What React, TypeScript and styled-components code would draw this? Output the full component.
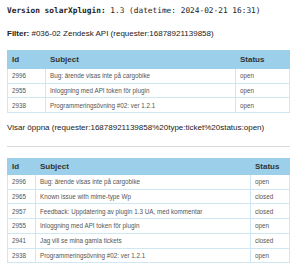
import React from "react";
import styled, {createGlobalStyle} from "styled-components";

const GlobalStyle = createGlobalStyle`
  html, body {
    margin: 0;
    padding: 0;
    background: #fff;
  }
  body {
    font-family: "Liberation Sans", Arial, sans-serif;
    color: #222;
  }
`;

const Page = styled.div`
  width: 282px;
  padding: 0 7px;
  display: flex;
  flex-direction: column;
`;

const VersionLine = styled.div`
  margin-top: 6px;
  height: 10px;
  line-height: 10px;
  font-family: "DejaVu Sans Mono", "Liberation Mono", monospace;
  font-size: 7.8px;
  white-space: nowrap;
  color: #222;

  b {
    font-weight: 700;
  }
`;

const FilterLine = styled.div`
  margin-top: 13px;
  height: 10px;
  line-height: 10px;
  font-size: 8px;
  white-space: nowrap;
  color: #222;
`;

const InfoLine = styled.div`
  margin-top: 10px;
  height: 10px;
  line-height: 10px;
  font-size: 8px;
  white-space: nowrap;
  color: #222;
`;

const Rule = styled.hr`
  margin: 13px 0 0 0;
  width: 283px;
  border: none;
  border-top: 1px solid #d8d8d8;
  height: 0;
`;

const Table = styled.table<{$top: number}>`
  margin-top: ${(p) => p.$top}px;
  width: 282px;
  border-collapse: collapse;
  table-layout: fixed;
`;

const Th = styled.th<{$h: number}>`
  background: #9bcfea;
  color: #333;
  font-size: 8px;
  font-weight: 700;
  text-align: left;
  padding: 0 4px;
  height: ${(p) => p.$h}px;
  border: 1px solid #9bcfea;
  white-space: nowrap;
`;

const Td = styled.td`
  font-size: 6.3px;
  color: #555;
  padding: 0 4px;
  height: 13.7px;
  border: 1px solid #cfe6f3;
  white-space: nowrap;
  overflow: hidden;
`;

interface Ticket {
  id: number;
  subject: string;
  status: string;
}

const filtered: Ticket[] = [
  {id: 2996, subject: "Bug: ärende visas inte på cargobike", status: "open"},
  {id: 2955, subject: "Inloggning med API token för plugin", status: "open"},
  {id: 2938, subject: "Programmeringsövning #02: ver 1.2.1", status: "open"},
];

const openTickets: Ticket[] = [
  {id: 2996, subject: "Bug: ärende visas inte på cargobike", status: "open"},
  {id: 2965, subject: "Known issue with mime-type Wp", status: "closed"},
  {id: 2957, subject: "Feedback: Uppdatering av plugin 1.3 UA, med kommentar", status: "closed"},
  {id: 2955, subject: "Inloggning med API token för plugin", status: "open"},
  {id: 2941, subject: "Jag vill se mina gamla tickets", status: "closed"},
  {id: 2938, subject: "Programmeringsövning #02: ver 1.2.1", status: "open"},
];

interface TicketTableProps {
  tickets: Ticket[];
  cols: [number, number, number];
  top: number;
  headH: number;
}

const TicketTable: React.FC<TicketTableProps> = ({tickets, cols, top, headH}) => (
  <Table $top={top}>
    <colgroup>
      <col style={{width: cols[0]}} />
      <col style={{width: cols[1]}} />
      <col style={{width: cols[2]}} />
    </colgroup>
    <thead>
      <tr>
        <Th $h={headH}>Id</Th>
        <Th $h={headH}>Subject</Th>
        <Th $h={headH}>Status</Th>
      </tr>
    </thead>
    <tbody>
      {tickets.map((t) => (
        <tr key={t.id}>
          <Td>{t.id}</Td>
          <Td>{t.subject}</Td>
          <Td>{t.status}</Td>
        </tr>
      ))}
    </tbody>
  </Table>
);

export default function App() {
  return (
    <>
      <GlobalStyle />
      <Page>
        <VersionLine>
          <b>Version solarXplugin:</b> 1.3 (datetime: 2024-02-21 16:31)
        </VersionLine>
        <FilterLine>
          <b>Filter:</b> #036-02 Zendesk API (requester:16878921139858)
        </FilterLine>
        <TicketTable tickets={filtered} cols={[38, 190, 54]} top={11} headH={17} />
        <InfoLine>
          Visar öppna (requester:16878921139858%20type:ticket%20status:open)
        </InfoLine>
        <Rule />
        <TicketTable tickets={openTickets} cols={[28, 215, 39]} top={11} headH={15} />
      </Page>
    </>
  );
}
